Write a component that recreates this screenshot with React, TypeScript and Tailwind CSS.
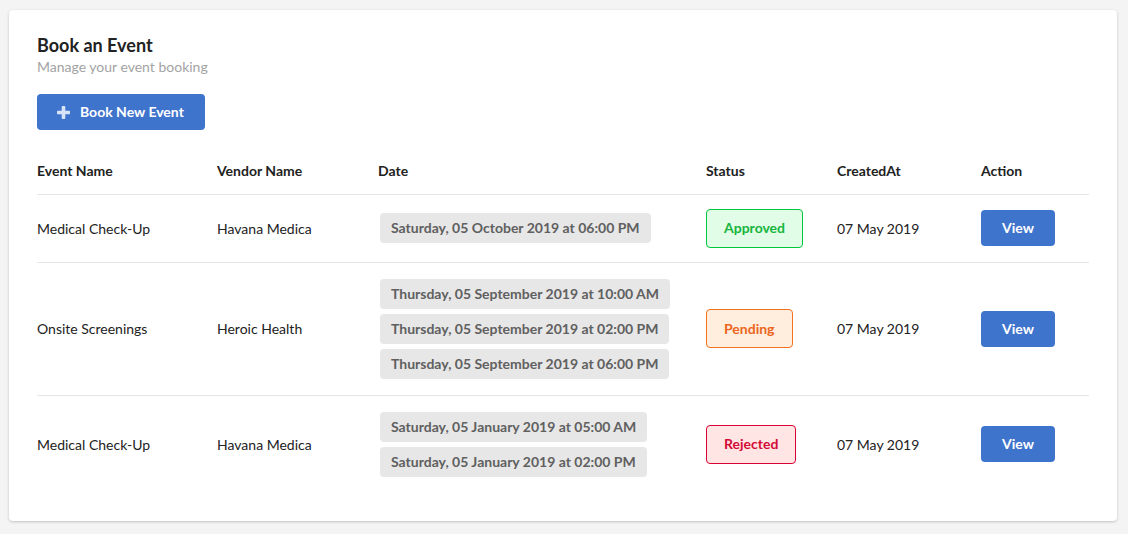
type Status = "Approved" | "Pending" | "Rejected";

interface Booking {
  event: string;
  vendor: string;
  dates: string[];
  status: Status;
  createdAt: string;
}

const bookings: Booking[] = [
  {
    event: "Medical Check-Up",
    vendor: "Havana Medica",
    dates: ["Saturday, 05 October 2019 at 06:00 PM"],
    status: "Approved",
    createdAt: "07 May 2019",
  },
  {
    event: "Onsite Screenings",
    vendor: "Heroic Health",
    dates: [
      "Thursday, 05 September 2019 at 10:00 AM",
      "Thursday, 05 September 2019 at 02:00 PM",
      "Thursday, 05 September 2019 at 06:00 PM",
    ],
    status: "Pending",
    createdAt: "07 May 2019",
  },
  {
    event: "Medical Check-Up",
    vendor: "Havana Medica",
    dates: [
      "Saturday, 05 January 2019 at 05:00 AM",
      "Saturday, 05 January 2019 at 02:00 PM",
    ],
    status: "Rejected",
    createdAt: "07 May 2019",
  },
];

const statusStyles: Record<Status, string> = {
  Approved: "border-[#00c740] bg-[#e1fce7] text-[#16b53c]",
  Pending: "border-[#f2711c] bg-[#ffeede] text-[#eb6420]",
  Rejected: "border-[#db0034] bg-[#ffe6e4] text-[#d30a36]",
};

const columns = [
  { label: "Event Name", width: "w-[180px]" },
  { label: "Vendor Name", width: "w-[161px]" },
  { label: "Date", width: "w-[328px]" },
  { label: "Status", width: "w-[131px]" },
  { label: "CreatedAt", width: "w-[144px]" },
  { label: "Action", width: "w-[108px]" },
];

function PlusIcon() {
  return (
    <svg className="size-[13px] opacity-80" viewBox="0 0 13 13" fill="currentColor" aria-hidden="true">
      <path d="M5.6 0h1.8q.9 0 .9.9v3.8h3.8q.9 0 .9.9v1.8q0 .9-.9.9H8.3v3.8q0 .9-.9.9H5.6q-.9 0-.9-.9V8.3H.9Q0 8.3 0 7.4V5.6q0-.9.9-.9h3.8V.9q0-.9.9-.9z" />
    </svg>
  );
}

function BookingRow({ booking }: { booking: Booking }) {
  return (
    <tr className="border-t border-[#e6e6e6]">
      <td className="pt-px">{booking.event}</td>
      <td className="pt-px">{booking.vendor}</td>
      <td className="py-4">
        <ul className="flex flex-col items-start gap-[5px] pl-0.5">
          {booking.dates.map((date) => (
            <li
              key={date}
              className="flex h-[30px] items-center rounded bg-[#e7e7e7] px-[11px] font-bold whitespace-nowrap text-[#606060]"
            >
              {date}
            </li>
          ))}
        </ul>
      </td>
      <td className="py-3.5">
        <span
          className={`inline-flex h-[39px] items-center rounded border px-[17px] align-middle font-bold ${statusStyles[booking.status]}`}
        >
          {booking.status}
        </span>
      </td>
      <td className="pt-px">{booking.createdAt}</td>
      <td>
        <button
          type="button"
          className="h-9 cursor-pointer rounded bg-[#3f74cd] px-[21px] align-middle font-bold text-white hover:bg-[#3465bb]"
        >
          View
        </button>
      </td>
    </tr>
  );
}

export default function App() {
  return (
    <div className="min-h-screen bg-[#f4f4f4] pt-2.5 pr-[11px] pb-3 pl-[9px] font-['Lato',sans-serif] text-sm text-[#222222]">
      <main className="rounded bg-white px-7 pt-[25px] pb-7 shadow-[0_1px_3px_rgba(0,0,0,0.2)]">
        <h1 className="text-lg leading-5 font-bold">Book an Event</h1>
        <p className="mt-0.5 leading-5 text-[#a3a3a3]">Manage your event booking</p>
        <button
          type="button"
          className="mt-[17px] flex h-9 cursor-pointer items-center gap-2.5 rounded bg-[#3f74cd] pr-[21px] pl-5 font-bold text-white hover:bg-[#3465bb]"
        >
          <PlusIcon />
          Book New Event
        </button>
        <table className="mt-[18px] w-full table-fixed border-collapse text-left">
          <thead>
            <tr className="h-[46px]">
              {columns.map((column) => (
                <th key={column.label} scope="col" className={`${column.width} font-bold`}>
                  {column.label}
                </th>
              ))}
            </tr>
          </thead>
          <tbody>
            {bookings.map((booking, index) => (
              <BookingRow key={index} booking={booking} />
            ))}
          </tbody>
        </table>
      </main>
    </div>
  );
}
